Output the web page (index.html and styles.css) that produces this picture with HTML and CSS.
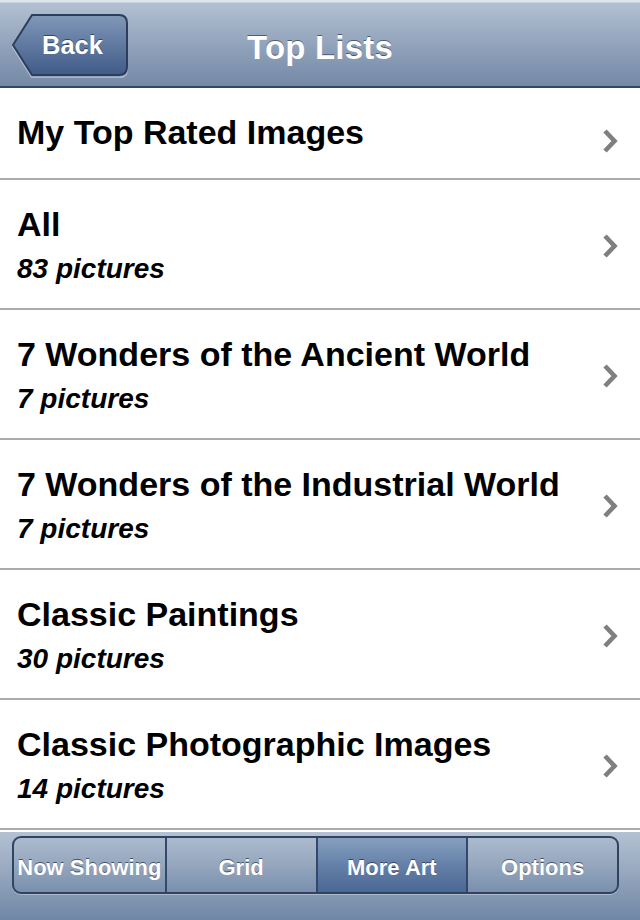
FILE: index.html
```html
<!DOCTYPE html>
<html>
<head>
<meta charset="utf-8">
<link rel="stylesheet" href="styles.css">
</head>
<body>
<div class="screen">
  <header class="navbar">
    <div class="nav-side">
      <a class="back">
        <svg class="back-shape" width="118" height="66" viewBox="0 0 118 66">
          <defs>
            <linearGradient id="bg" x1="0" y1="0" x2="0" y2="1">
              <stop offset="0" stop-color="#8198b8"/>
              <stop offset="0.5" stop-color="#6079a0"/>
              <stop offset="1" stop-color="#3f5b87"/>
            </linearGradient>
          </defs>
          <path d="M2 33.5 L21 4 L108 4 Q116 4 116 12 L116 56 Q116 64 108 64 L21 64 Z" fill="none" stroke="rgba(255,255,255,0.35)" stroke-width="2" transform="translate(0,1.5)"/>
          <path d="M2 33 L21 3 L108 3 Q116 3 116 11 L116 55 Q116 63 108 63 L21 63 Z" fill="url(#bg)" stroke="#2c3e5c" stroke-width="2"/>
        </svg>
        <span class="back-label">Back</span>
      </a>
    </div>
    <h1 class="title">Top Lists</h1>
    <div class="nav-side"></div>
  </header>

  <ul class="list">
    <li class="row row-first">
      <div class="text"><div class="name">My Top Rated Images</div></div>
      <svg class="chev chev-first" width="16" height="26" viewBox="0 0 16 26"><path d="M3 3 L12.5 13 L3 23" fill="none" stroke="#7f7f7f" stroke-width="4.6"/></svg>
    </li>
    <li class="row">
      <div class="text"><div class="name">All</div><div class="count">83 pictures</div></div>
      <svg class="chev" width="16" height="26" viewBox="0 0 16 26"><path d="M3 3 L12.5 13 L3 23" fill="none" stroke="#7f7f7f" stroke-width="4.6"/></svg>
    </li>
    <li class="row">
      <div class="text"><div class="name">7 Wonders of the Ancient World</div><div class="count">7 pictures</div></div>
      <svg class="chev" width="16" height="26" viewBox="0 0 16 26"><path d="M3 3 L12.5 13 L3 23" fill="none" stroke="#7f7f7f" stroke-width="4.6"/></svg>
    </li>
    <li class="row">
      <div class="text"><div class="name">7 Wonders of the Industrial World</div><div class="count">7 pictures</div></div>
      <svg class="chev" width="16" height="26" viewBox="0 0 16 26"><path d="M3 3 L12.5 13 L3 23" fill="none" stroke="#7f7f7f" stroke-width="4.6"/></svg>
    </li>
    <li class="row">
      <div class="text"><div class="name">Classic Paintings</div><div class="count">30 pictures</div></div>
      <svg class="chev" width="16" height="26" viewBox="0 0 16 26"><path d="M3 3 L12.5 13 L3 23" fill="none" stroke="#7f7f7f" stroke-width="4.6"/></svg>
    </li>
    <li class="row">
      <div class="text"><div class="name">Classic Photographic Images</div><div class="count">14 pictures</div></div>
      <svg class="chev" width="16" height="26" viewBox="0 0 16 26"><path d="M3 3 L12.5 13 L3 23" fill="none" stroke="#7f7f7f" stroke-width="4.6"/></svg>
    </li>
  </ul>

  <footer class="toolbar">
    <div class="segmented">
      <div class="seg">Now Showing</div>
      <div class="seg">Grid</div>
      <div class="seg seg-active">More Art</div>
      <div class="seg">Options</div>
    </div>
  </footer>
</div>
</body>
</html>
```

FILE: styles.css
```css
* { box-sizing: border-box; }

html, body {
  margin: 0;
  padding: 0;
  background: #ffffff;
}

body {
  font-family: "Liberation Sans", Arial, Helvetica, sans-serif;
  width: 640px;
  height: 920px;
  overflow: hidden;
}

.screen {
  width: 640px;
  height: 920px;
  display: flex;
  flex-direction: column;
}

/* ---------- Navigation bar ---------- */
.navbar {
  height: 88px;
  flex: none;
  display: grid;
  grid-template-columns: 1fr auto 1fr;
  align-items: start;
  background: linear-gradient(to bottom, #dfe5ed 0, #dfe5ed 2px, #b3c0d2 3px, #96a7be 45%, #7389a7 100%);
  border-bottom: 2px solid #34465f;
}

.nav-side {
  display: flex;
}

.back {
  position: relative;
  width: 118px;
  height: 66px;
  margin-left: 11px;
  margin-top: 12px;
  display: flex;
  align-items: flex-start;
  justify-content: center;
}

.back-shape {
  position: absolute;
  left: 0;
  top: 0;
}

.back-label {
  position: relative;
  color: #ffffff;
  font-weight: bold;
  font-size: 25.5px;
  line-height: 30px;
  padding-top: 18px;
  padding-left: 5px;
  text-shadow: 0 -1px 0 rgba(20, 30, 50, 0.6);
}

.title {
  margin: 0;
  color: #ffffff;
  font-weight: bold;
  font-size: 33px;
  line-height: 36px;
  padding-top: 30px;
  letter-spacing: 0.2px;
  text-shadow: 0 -1px 0 rgba(30, 40, 60, 0.6);
}

/* ---------- List ---------- */
.list {
  list-style: none;
  margin: 0;
  padding: 0;
  flex: none;
}

.row {
  height: 130px;
  display: flex;
  align-items: center;
  padding-left: 17px;
  padding-right: 22px;
  border-bottom: 2px solid #ababab;
}

.row-first {
  height: 92px;
}

.text {
  flex: 1;
  align-self: flex-start;
  padding-top: 25px;
}

.row-first .text {
  padding-top: 25px;
}

.name {
  font-weight: bold;
  font-size: 34px;
  line-height: 38px;
  color: #000000;
  white-space: nowrap;
}

.count {
  font-weight: bold;
  font-style: italic;
  font-size: 28px;
  line-height: 36px;
  margin-top: 8px;
  color: #000000;
}

.chev {
  flex: none;
  margin-top: 4px;
}

.chev-first {
  margin-top: 16px;
}

/* ---------- Toolbar ---------- */
.toolbar {
  flex: 1;
  border-top: 2px solid #ffffff;
  background: linear-gradient(to bottom, #b4c1d3 0, #97a8bf 45%, #6f86a5 100%);
  padding-top: 4px;
  padding-left: 12px;
}

.segmented {
  width: 607px;
  height: 58px;
  display: grid;
  grid-template-columns: repeat(4, 1fr);
  border: 2px solid #2f4462;
  border-radius: 9px;
  overflow: hidden;
  box-shadow: 0 1px 0 rgba(255, 255, 255, 0.35);
  background: linear-gradient(to bottom, #acbace 0, #95a6bd 50%, #7a8fad 100%);
}

.seg {
  display: flex;
  align-items: center;
  justify-content: center;
  padding-top: 6px;
  color: #ffffff;
  font-weight: bold;
  font-size: 22px;
  text-shadow: 0 -1px 0 rgba(30, 40, 60, 0.7);
  border-left: 2px solid #34496a;
  white-space: nowrap;
}

.seg:first-child {
  border-left: none;
}

.seg-active {
  background: linear-gradient(to bottom, #87a0c0 0, #6580a8 50%, #4a6895 100%);
}
```
